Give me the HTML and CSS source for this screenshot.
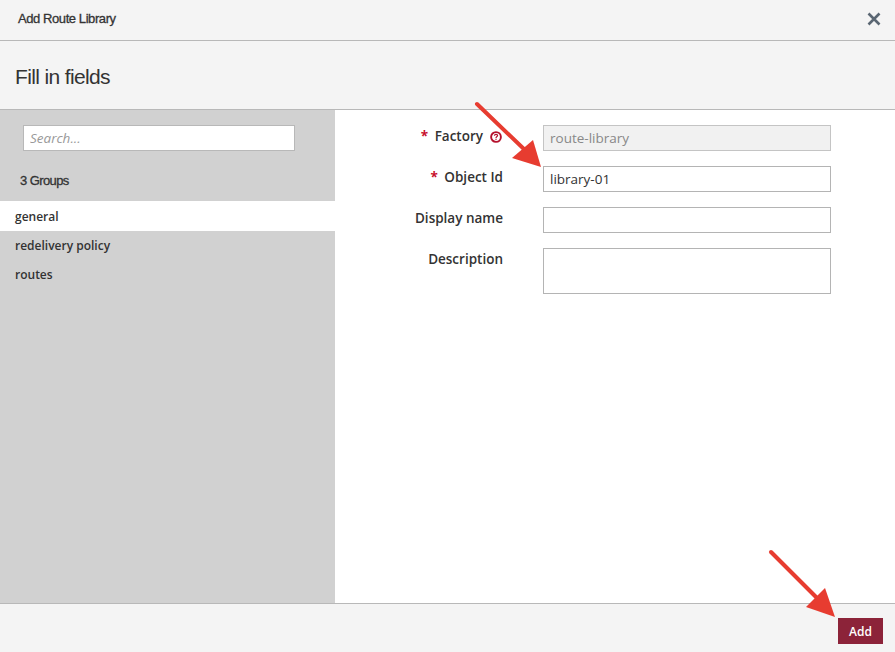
FILE: index.html
```html
<!DOCTYPE html>
<html lang="en">
<head>
<meta charset="utf-8">
<title>Add Route Library</title>
<link rel="stylesheet" href="styles.css">
</head>
<body>
<div class="dialog">
  <header class="titlebar">
    <h1 class="title">Add Route Library</h1>
    <svg class="close" viewBox="0 0 14 14" width="14" height="14"><path d="M1.5 1.5 12.5 12.5M12.5 1.5 1.5 12.5" fill="none" stroke="#5a6672" stroke-width="2.6"/></svg>
  </header>
  <div class="subhead"><h2 class="heading">Fill in fields</h2></div>
  <main class="content">
    <aside class="sidebar">
      <div class="search"><input class="search-input" type="text" placeholder="Search..."></div>
      <div class="count">3 Groups</div>
      <ul class="groups">
        <li class="group group-active">general</li>
        <li class="group">redelivery policy</li>
        <li class="group">routes</li>
      </ul>
    </aside>
    <form class="form">
      <div class="row">
        <label class="label"><span class="req">*</span>Factory<svg class="help" viewBox="0 0 12 12" width="12" height="12"><circle cx="6" cy="6" r="4.9" fill="none" stroke="#b5102c" stroke-width="1.9"/><path d="M4.4 4.8C4.5 3.8 5.1 3.3 6 3.3 6.9 3.3 7.6 3.8 7.6 4.6 7.6 5.6 6 5.6 6 7" fill="none" stroke="#b5102c" stroke-width="1.2"/><rect x="5.4" y="7.7" width="1.2" height="1.2" fill="#b5102c"/></svg></label>
        <input class="field field-disabled" type="text" value="route-library" disabled>
      </div>
      <div class="row">
        <label class="label"><span class="req">*</span>Object Id</label>
        <input class="field" type="text" value="library-01">
      </div>
      <div class="row">
        <label class="label">Display name</label>
        <input class="field" type="text">
      </div>
      <div class="row">
        <label class="label">Description</label>
        <textarea class="field field-area"></textarea>
      </div>
    </form>
  </main>
  <footer class="footer"><button class="add" type="button">Add</button></footer>
  <svg class="arrow-layer" width="895" height="652" viewBox="0 0 895 652">
    <path d="M477 104 526 151" fill="none" stroke="#e73c30" stroke-width="4" stroke-linecap="round"/>
    <path d="M533 140 541 167 512 158Z" fill="#e73c30"/>
    <path d="M771 552 820 601" fill="none" stroke="#e73c30" stroke-width="4" stroke-linecap="round"/>
    <path d="M825 588 835 617 806 607Z" fill="#e73c30"/>
  </svg>
</div>
</body>
</html>
```
FILE: styles.css
```css
* { box-sizing: border-box; }
html, body { margin: 0; padding: 0; }
body { background: #fff; font-family: "Open Sans", sans-serif; color: #333; }
.dialog { position: relative; width: 895px; height: 652px; display: flex; flex-direction: column; overflow: hidden; }
.titlebar { height: 41px; flex: none; background: #f4f4f4; border-bottom: 1px solid #b8b8b8; display: flex; align-items: center; justify-content: space-between; padding: 0 14px 3px 18px; }
.title { margin: 0; font: normal 13px "Liberation Sans", Arial, sans-serif; -webkit-text-stroke: 0.3px #333; letter-spacing: -0.42px; color: #333; }
.subhead { height: 69px; flex: none; background: #f4f4f4; border-bottom: 1px solid #b8b8b8; display: flex; align-items: center; padding: 3px 15px 0; }
.heading { margin: 0; font: normal 21px "Liberation Sans", Arial, sans-serif; letter-spacing: -0.64px; color: #333; }
.content { flex: 1; display: flex; min-height: 0; }
.sidebar { width: 335px; flex: none; background: #d1d1d1; display: flex; flex-direction: column; }
.search { padding: 15px 40px 0 23px; }
.search-input { display: block; width: 272px; height: 26px; border: 1px solid #b8b8b8; background: #fff; padding: 0 6px 1px; font: italic 13.5px "Open Sans", sans-serif; color: #333; outline: none; }
.search-input::placeholder { color: #999; opacity: 1; }
.count { margin-top: 20px; height: 30px; padding-left: 20px; font: normal 13px/20px "Liberation Sans", Arial, sans-serif; -webkit-text-stroke: 0.3px #333; letter-spacing: -0.6px; color: #333; }
.groups { list-style: none; margin: 0; padding: 0; }
.group { height: 29px; padding-left: 15px; font-size: 12px; font-weight: 600; line-height: 29px; color: #333; }
.group-active { height: 30px; line-height: 31px; background: #fff; }
.form { flex: 1; min-width: 0; padding: 15px 0 0 0; display: flex; flex-direction: column; gap: 15px; }
.row { display: flex; align-items: flex-start; }
.label { width: 168px; flex: none; text-align: right; margin-right: 40px; padding-top: 2px; font-size: 13.5px; font-weight: 600; line-height: 18px; color: #333; white-space: nowrap; }
.req { color: #c8102e; font-weight: 700; margin-right: 6.5px; }
.help { vertical-align: -2px; margin-left: 7px; margin-right: 1px; }
.field { display: block; width: 288px; height: 26px; flex: none; border: 1px solid #b4b4b4; background: #fff; padding: 0 6px 1px; font: 13.5px "Open Sans", sans-serif; color: #333; outline: none; resize: none; margin: 0; }
.field-disabled { background: #f1f1f1; color: #888; border-color: #c4c4c4; }
.field-area { height: 46px; }
.footer { height: 49px; flex: none; background: #f4f4f4; border-top: 1px solid #b8b8b8; display: flex; align-items: flex-start; justify-content: flex-end; padding: 14px 12px 0 0; }
.add { width: 45px; height: 26px; border: 0; padding: 0; background: #8c2339; color: #fff; font: 600 12px "Open Sans", sans-serif; }
.arrow-layer { position: absolute; left: 0; top: 0; pointer-events: none; }
```
